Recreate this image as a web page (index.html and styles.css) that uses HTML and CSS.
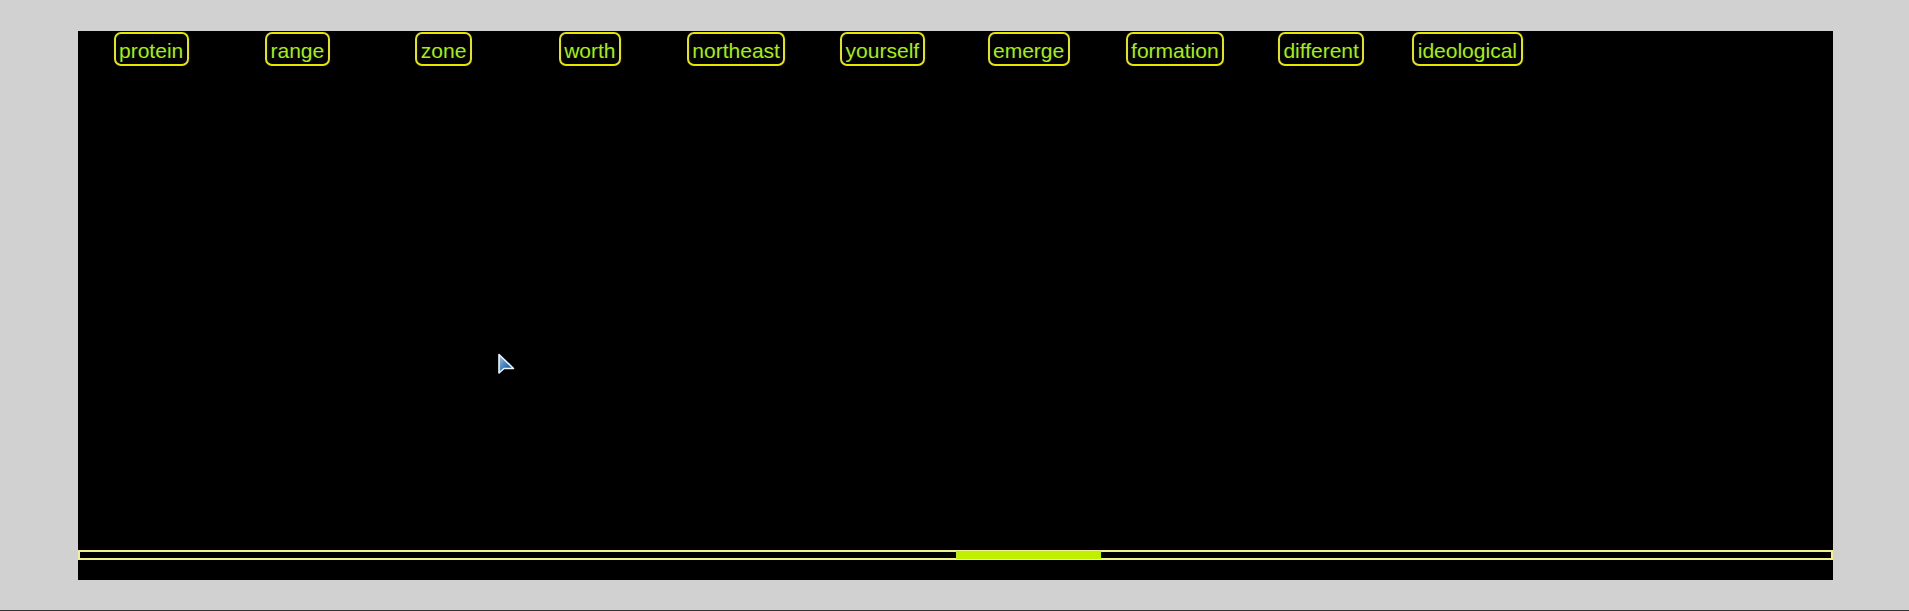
FILE: index.html
```html
<!DOCTYPE html>
<html>
<head>
<meta charset="utf-8">
<link rel="stylesheet" href="styles.css">
</head>
<body>
<div class="stage">
  <div class="tags">
    <span class="tag">protein</span>
    <span class="tag">range</span>
    <span class="tag">zone</span>
    <span class="tag">worth</span>
    <span class="tag">northeast</span>
    <span class="tag">yourself</span>
    <span class="tag">emerge</span>
    <span class="tag">formation</span>
    <span class="tag">different</span>
    <span class="tag">ideological</span>
  </div>
  <div class="field">
    <svg class="cursor" width="18" height="25" viewBox="0 0 18 25">
      <defs>
        <linearGradient id="cg" x1="0" y1="0" x2="1" y2="1">
          <stop offset="0" stop-color="#9cc8ec"/>
          <stop offset="0.6" stop-color="#2f6fae"/>
          <stop offset="1" stop-color="#1d4f86"/>
        </linearGradient>
      </defs>
      <path d="M2 1.5 L2 20 L7 15.5 L16.5 15.5 Z" fill="url(#cg)" stroke="#e8f4ff" stroke-width="1.6" stroke-linejoin="round"/>
    </svg>
  </div>
  <div class="track">
    <div class="fill" style="margin-left:50%;width:8.3333%"></div>
  </div>
</div>
<div class="edge"></div>
</body>
</html>
```
FILE: styles.css
```css
html, body {
  margin: 0;
  padding: 0;
}
body {
  background: #d1d1d1;
  width: 1909px;
  height: 611px;
  display: flex;
  flex-direction: column;
  overflow: hidden;
  font-family: "Liberation Sans", Arial, sans-serif;
}
.stage {
  margin: 31px 0 0 78px;
  width: 1755px;
  height: 549px;
  background: #000;
  display: flex;
  flex-direction: column;
}
.tags {
  display: grid;
  grid-template-columns: repeat(12, 1fr);
  padding-top: 1px;
}
.tag {
  justify-self: center;
  box-sizing: border-box;
  height: 34px;
  border: 2px solid #e6e600;
  border-radius: 7px;
  padding: 5px 3.5px 0;
  color: #a8f000;
  font-size: 21px;
  line-height: 24px;
  white-space: nowrap;
}
.field {
  flex: 1;
  position: relative;
}
.cursor {
  position: absolute;
  left: 419px;
  top: 287px;
}
.track {
  box-sizing: border-box;
  height: 10px;
  border: 2px solid #f0f08c;
  margin-bottom: 20px;
}
.fill {
  height: 8px;
  margin-top: -1px;
  background: #c0f000;
}
.edge {
  margin-top: auto;
  height: 1px;
  background: #333;
}
```
